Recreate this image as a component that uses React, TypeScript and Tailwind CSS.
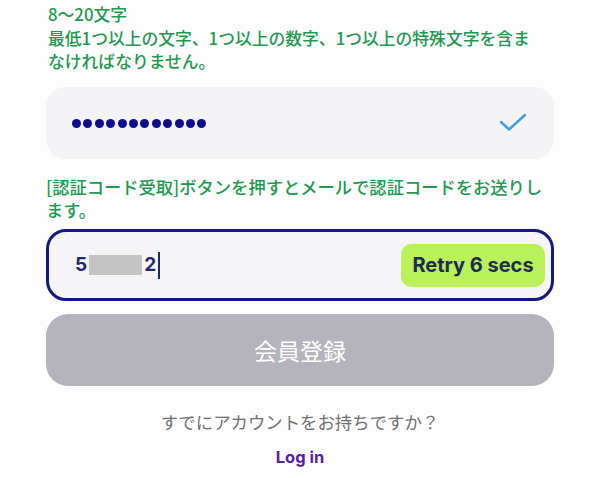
import { useState } from "react";

const jp = "font-['Noto_Sans_CJK_JP','Noto_Sans',sans-serif]";

function Dots({ count }: { count: number }) {
  return (
    <div className="flex items-center gap-[2.4px]">
      {Array.from({ length: count }).map((_, i) => (
        <span key={i} className="block w-[9px] h-[9px] rounded-full bg-[#0b0d8a]" />
      ))}
    </div>
  );
}

export default function App() {
  const [secs] = useState(6);

  return (
    <div className={`min-h-[478px] w-[600px] bg-[#fdfdfd] px-[46px] pt-[3px] ${jp}`}>
      {/* password rules */}
      <p className="pl-[2px] pr-[20px] text-[16.8px] font-medium leading-[23.5px] text-[#219a50]">
        8〜20文字
        <br />
        最低1つ以上の文字、1つ以上の数字、1つ以上の特殊文字を含まなければなりません。
      </p>

      {/* password field */}
      <div className="mt-[13.5px] flex h-[72px] items-center justify-between rounded-[20px] bg-[#f4f4f6] pl-[26px] pr-[27px]">
        <Dots count={12} />
        <svg width="28" height="20" viewBox="0 0 28 20" fill="none">
          <polyline
            points="2,9 10,16.5 26,2"
            stroke="#3d9fe3"
            strokeWidth="2.4"
            strokeLinecap="round"
            strokeLinejoin="round"
          />
        </svg>
      </div>

      <p className="mt-[15.5px] pr-[4px] text-[17.3px] font-medium leading-[23px] text-[#219a50]">
        [認証コード受取]ボタンを押すとメールで認証コードをお送りします。
      </p>

      {/* verification code */}
      <div className="mt-[8.5px] flex h-[72px] items-center justify-between rounded-[20px] border-[3px] border-[#14197f] bg-[#f5f5f7] pl-[26px] pr-[6px]">
        <div className="flex items-center font-['Inter',sans-serif] text-[19px] font-bold text-[#1f2a6e]">
          <span>5</span>
          <span className="mx-[2px] block h-[20px] w-[53px] bg-[#c4c4c4]" />
          <span>2</span>
          <span className="ml-[2px] block h-[27px] w-[1.5px] bg-[#1f2a6e]" />
        </div>
        <button className="flex h-[43px] w-[144px] items-center justify-center rounded-[10px] bg-[#b9f15a] font-['Inter',sans-serif] text-[20px] font-bold text-[#1c2b52]">
          Retry {secs} secs
        </button>
      </div>

      <button className="mt-[13px] flex h-[72px] w-full items-center justify-center rounded-[22px] bg-[#b5b3bc] text-[23px] text-white">
        会員登録
      </button>

      <p className="mt-[24px] text-center text-[17.4px] leading-[24px] text-[#707070]">
        すでにアカウントをお持ちですか？
      </p>
      <p className="mt-[11px] text-center font-['Inter',sans-serif] text-[16.5px] font-bold leading-[24px] text-[#5a1bae]">
        Log in
      </p>
    </div>
  );
}
